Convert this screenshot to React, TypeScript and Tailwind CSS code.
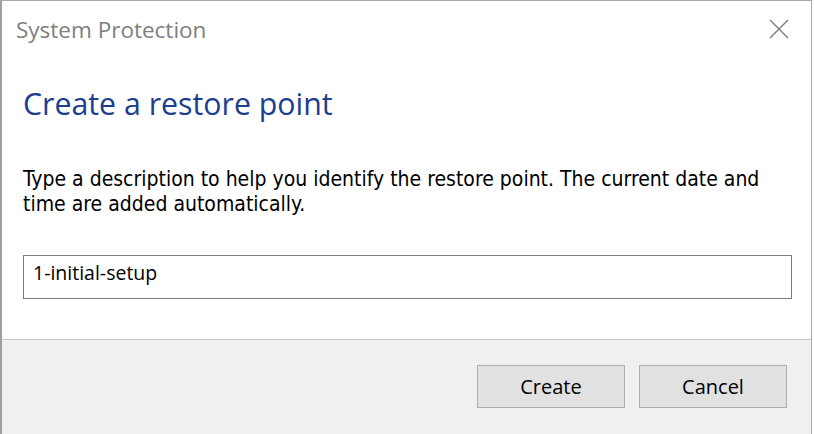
import React from 'react';

export default function App() {
  return (
    <div className="w-[814px] h-[434px] bg-white overflow-hidden flex">
      <div className="flex flex-col w-[812px] h-[434px] border-l-2 border-t border-r border-l-[#a0a0a0] border-t-[#a8a8a8] border-r-[#a8a8a8]">
        <div className="flex items-start justify-between h-[48px]">
          <div
            className="pl-[14px] pt-[14px] text-[22.5px] leading-[30px] text-[#808080]"
            style={{ fontFamily: '"Open Sans", sans-serif' }}
          >
            System Protection
          </div>
          <div className="pr-[22px] pt-[18px]">
            <svg width="20" height="20" viewBox="0 0 20 20">
              <path d="M1 1 L19 19 M19 1 L1 19" stroke="#7a7a7a" strokeWidth="1.4" fill="none" />
            </svg>
          </div>
        </div>
        <div className="flex-1 flex flex-col px-[21px]">
          <h1
            className="mt-[35px] text-[30.3px] leading-[40px] text-[#1c3e8e]"
            style={{ fontFamily: '"Open Sans", sans-serif' }}
          >
            Create a restore point
          </h1>
          <p
            className="mt-[43px] text-[21px] leading-[25px] text-black"
            style={{ fontFamily: '"DejaVu Sans Condensed", "DejaVu Sans", sans-serif' }}
          >
            Type a description to help you identify the restore point. The current date and
            <br />
            time are added automatically.
          </p>
          <div className="mt-[38px] h-[44px] w-[769px] border border-[#7a7a7a] flex items-start pl-[9px] pt-[4px]">
            <span
              className="text-[19.5px] leading-[26px] text-black"
              style={{ fontFamily: '"Open Sans", sans-serif' }}
            >
              1-initial-setup
            </span>
          </div>
        </div>
        <div className="h-[95px] bg-[#f0f0f0] border-t border-[#c8c8c8] flex justify-end items-start gap-[14px] pr-[24px] pt-[25px]">
          <button
            className="w-[148px] h-[43px] bg-[#e1e1e1] border border-[#adadad] text-[20px] text-black"
            style={{ fontFamily: '"Open Sans", sans-serif' }}
          >
            Create
          </button>
          <button
            className="w-[148px] h-[43px] bg-[#e1e1e1] border border-[#adadad] text-[20px] text-black"
            style={{ fontFamily: '"Open Sans", sans-serif' }}
          >
            Cancel
          </button>
        </div>
      </div>
    </div>
  );
}
